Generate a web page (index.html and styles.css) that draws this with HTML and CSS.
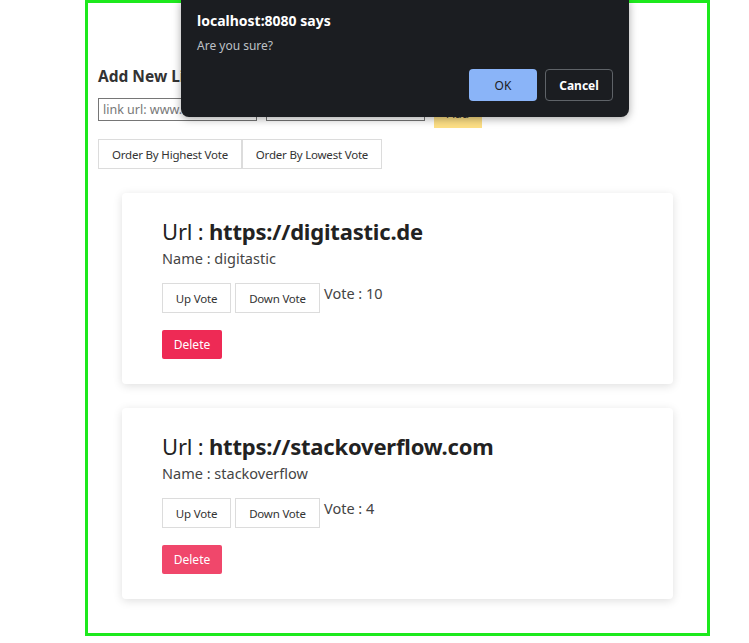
FILE: index.html
```html
<!DOCTYPE html>
<html>
<head>
<meta charset="utf-8">
<link rel="stylesheet" href="styles.css">
</head>
<body>
<div class="frame">
  <h3 class="add-title">Add New Link</h3>
  <div class="add-row">
    <input class="field" type="text" placeholder="link url: www.example.com">
    <input class="field" type="text" placeholder="link name">
    <button class="add-btn">Add</button>
  </div>
  <div class="order-row">
    <button class="btn">Order By Highest Vote</button><button class="btn">Order By Lowest Vote</button>
  </div>
  <div class="card">
    <div class="url">Url : <b>https://digitastic.de</b></div>
    <div class="name">Name : digitastic</div>
    <div class="vote-row">
      <button class="btn vbtn">Up Vote</button>
      <button class="btn vbtn">Down Vote</button>
      <span class="vote">Vote : 10</span>
    </div>
    <button class="del">Delete</button>
  </div>
  <div class="card">
    <div class="url">Url : <b>https://stackoverflow.com</b></div>
    <div class="name">Name : stackoverflow</div>
    <div class="vote-row">
      <button class="btn vbtn">Up Vote</button>
      <button class="btn vbtn">Down Vote</button>
      <span class="vote">Vote : 4</span>
    </div>
    <button class="del del-light">Delete</button>
  </div>
</div>
<div class="dialog">
  <div class="dlg-title">localhost:8080 says</div>
  <div class="dlg-msg">Are you sure?</div>
  <div class="dlg-actions">
    <button class="dlg-ok">OK</button>
    <button class="dlg-cancel">Cancel</button>
  </div>
</div>
</body>
</html>
```
FILE: styles.css
```css
* { box-sizing: border-box; }
body {
  margin: 0;
  background: #fff;
  font-family: "Noto Sans", "Open Sans", sans-serif;
  color: #333;
}
.frame {
  margin-left: 85px;
  width: 625px;
  height: 636px;
  border: 3px solid #1de91d;
  padding: 63px 10px 10px;
}
.add-title {
  margin: 0 0 12px;
  font-size: 15.5px;
  line-height: 20px;
  font-weight: 700;
  color: #333;
}
.add-row {
  display: flex;
  align-items: flex-start;
  gap: 9px;
  height: 30px;
}
.field {
  width: 159px;
  height: 23px;
  border: 1px solid #767676;
  padding: 0 4px;
  font-family: inherit;
  font-size: 12.5px;
  color: #333;
  margin: 0;
}
.field::placeholder { color: #777; }
.add-btn {
  width: 48px;
  height: 30px;
  border: none;
  background: #fddf85;
  color: #333;
  font-family: inherit;
  font-size: 12px;
}
.order-row {
  display: flex;
  margin-top: 11px;
}
.btn {
  background: #fff;
  border: 1px solid #dcdcdc;
  height: 30px;
  padding: 0;
  white-space: nowrap;
  font-family: inherit;
  font-size: 11.5px;
  letter-spacing: -0.2px;
  color: #333;
  margin: 0;
}
.order-row .btn:first-child { width: 144px; }
.order-row .btn:last-child { width: 140px; }
.card {
  margin: 24px 24px 0;
  background: #fff;
  border-radius: 4px;
  box-shadow: 0 2px 10px rgba(0,0,0,0.13);
  padding: 23px 40px 25px;
  height: 191px;
}
.url {
  font-size: 22px;
  line-height: 30px;
  letter-spacing: -0.2px;
  color: #222;
}
.url b { font-weight: 700; }
.name {
  margin-top: 2px;
  font-size: 14.5px;
  line-height: 20px;
  color: #444;
}
.vote-row {
  display: flex;
  align-items: flex-start;
  gap: 4px;
  margin-top: 15px;
}
.vbtn:first-child { width: 69px; }
.vbtn:nth-child(2) { width: 85px; }
.vote {
  font-size: 14.5px;
  line-height: 20px;
  color: #444;
}
.del {
  display: block;
  margin-top: 17px;
  width: 60px;
  height: 29px;
  border: none;
  border-radius: 2px;
  background: #ee2a55;
  color: #fff;
  font-family: inherit;
  font-size: 12px;
}
.del-light { background: #f0476b; }
.dialog {
  position: absolute;
  left: 181px;
  top: 0;
  width: 448px;
  height: 117px;
  background: #1b1d21;
  border-radius: 0 0 8px 8px;
  box-shadow: 0 2px 8px rgba(0,0,0,0.35);
  padding: 12px 16px 16px;
}
.dlg-title {
  color: #fff;
  font-size: 14px;
  font-weight: 700;
  line-height: 18px;
}
.dlg-msg {
  margin-top: 8px;
  color: #bdc1c6;
  font-size: 12px;
  line-height: 16px;
}
.dlg-actions {
  display: flex;
  justify-content: flex-end;
  gap: 8px;
  margin-top: 15px;
}
.dlg-ok {
  width: 68px;
  height: 32px;
  border: none;
  border-radius: 4px;
  background: #8ab4f8;
  color: #202124;
  font-family: inherit;
  font-size: 12px;
}
.dlg-cancel {
  width: 68px;
  height: 32px;
  border: 1px solid #5f6368;
  border-radius: 4px;
  background: #1b1d21;
  color: #fff;
  font-family: inherit;
  font-size: 12px;
  font-weight: 700;
}
```
